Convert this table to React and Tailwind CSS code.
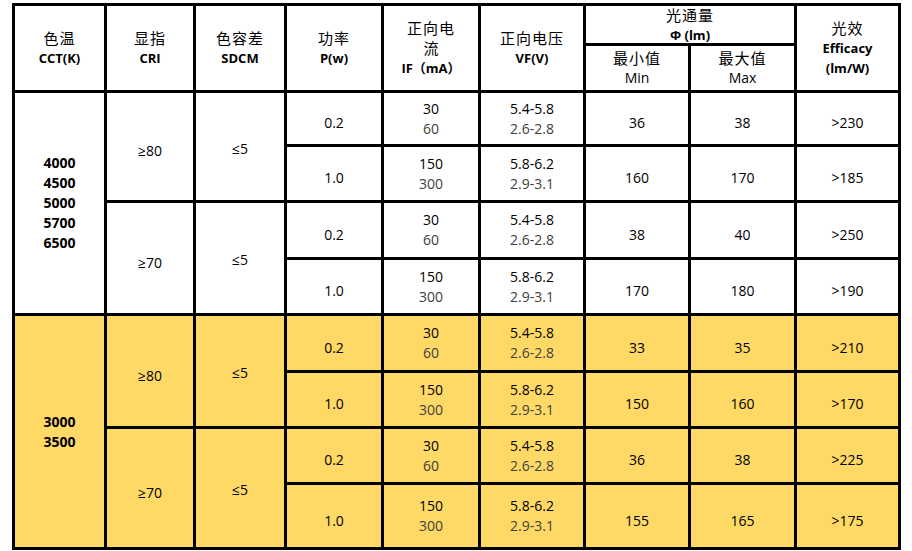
const groups = [
  {
    cct: ["4000", "4500", "5000", "5700", "6500"],
    bg: "bg-white",
    rows: [
      {
        cri: "≥80",
        items: [
          { p: "0.2", i: ["30", "60"], v: ["5.4-5.8", "2.6-2.8"], min: "36", max: "38", eff: ">230" },
          { p: "1.0", i: ["150", "300"], v: ["5.8-6.2", "2.9-3.1"], min: "160", max: "170", eff: ">185" },
        ],
      },
      {
        cri: "≥70",
        items: [
          { p: "0.2", i: ["30", "60"], v: ["5.4-5.8", "2.6-2.8"], min: "38", max: "40", eff: ">250" },
          { p: "1.0", i: ["150", "300"], v: ["5.8-6.2", "2.9-3.1"], min: "170", max: "180", eff: ">190" },
        ],
      },
    ],
  },
  {
    cct: ["3000", "3500"],
    bg: "bg-[#ffd966]",
    rows: [
      {
        cri: "≥80",
        items: [
          { p: "0.2", i: ["30", "60"], v: ["5.4-5.8", "2.6-2.8"], min: "33", max: "35", eff: ">210" },
          { p: "1.0", i: ["150", "300"], v: ["5.8-6.2", "2.9-3.1"], min: "150", max: "160", eff: ">170" },
        ],
      },
      {
        cri: "≥70",
        items: [
          { p: "0.2", i: ["30", "60"], v: ["5.4-5.8", "2.6-2.8"], min: "36", max: "38", eff: ">225" },
          { p: "1.0", i: ["150", "300"], v: ["5.8-6.2", "2.9-3.1"], min: "155", max: "165", eff: ">175" },
        ],
      },
    ],
  },
];

const font = {
  fontFamily: '"Open Sans", "Noto Sans CJK SC", sans-serif',
};

const Head = ({ className = "", children }) => (
  <div className={`bg-white flex flex-col items-center justify-center text-center leading-[20px] text-black ${className}`}>
    {children}
  </div>
);

const Two = ({ bg, lines }) => (
  <div className={`${bg} flex flex-col items-center justify-center text-[14px] leading-[20px]`}>
    <span className="text-black">{lines[0]}</span>
    <span className="text-[#404040]">{lines[1]}</span>
  </div>
);

const One = ({ bg, children, className = "pt-2" }) => (
  <div className={`${bg} flex items-center justify-center text-[14px] text-black ${className}`}>
    {children}
  </div>
);

const App = () => {
  return (
    <div className="w-[912px] h-[551px] bg-white pl-[12px] pt-[3px]" style={font}>
      <div className="grid w-[889px] bg-black p-[3px] gap-[3px] grid-cols-[89px_86px_88px_94px_94px_102px_102px_103px_101px] grid-rows-[37px_44px_51px_53px_54px_53px_54px_53px_53px_62px]">
        <Head className="row-span-2">
          <span className="text-[15px] tracking-[1px]">色温</span>
          <span className="text-[13px] font-bold">CCT(K)</span>
        </Head>
        <Head className="row-span-2">
          <span className="text-[15px] tracking-[1px]">显指</span>
          <span className="text-[13px] font-bold">CRI</span>
        </Head>
        <Head className="row-span-2">
          <span className="text-[15px] tracking-[1px]">色容差</span>
          <span className="text-[13px] font-bold">SDCM</span>
        </Head>
        <Head className="row-span-2">
          <span className="text-[15px] tracking-[1px]">功率</span>
          <span className="text-[13px] font-bold">P(w)</span>
        </Head>
        <Head className="row-span-2">
          <span className="text-[15px] tracking-[1px]">正向电</span>
          <span className="text-[15px]">流</span>
          <span className="text-[13px] font-bold">IF（mA）</span>
        </Head>
        <Head className="row-span-2">
          <span className="text-[15px] tracking-[1px]">正向电压</span>
          <span className="text-[13px] font-bold">VF(V)</span>
        </Head>
        <Head className="col-span-2">
          <span className="text-[15px] tracking-[1px]">光通量</span>
          <span className="text-[13px] font-bold">Φ (lm)</span>
        </Head>
        <Head className="row-span-2">
          <span className="text-[15px] tracking-[1px]">光效</span>
          <span className="text-[13px] font-bold">Efficacy</span>
          <span className="text-[13px] font-bold">(lm/W)</span>
        </Head>
        <Head className="text-[#404040]">
          <span className="text-[15px] tracking-[1px]">最小值</span>
          <span className="text-[14px]">Min</span>
        </Head>
        <Head className="text-[#404040]">
          <span className="text-[15px] tracking-[1px]">最大值</span>
          <span className="text-[14px]">Max</span>
        </Head>

        {groups.map((g, gi) =>
          g.rows.map((r, ri) => [
            ri === 0 && (
              <div
                key={`cct-${gi}`}
                className={`${g.bg} row-span-4 flex flex-col items-center justify-center text-[14px] font-bold leading-[20px] text-black`}
              >
                {g.cct.map((c) => (
                  <span key={c}>{c}</span>
                ))}
              </div>
            ),
            <One key={`cri-${gi}-${ri}`} bg={`${g.bg} row-span-2`}>
              {r.cri}
            </One>,
            <One key={`sd-${gi}-${ri}`} bg={`${g.bg} row-span-2`} className="pt-[3px]">
              ≤5
            </One>,
            ...r.items.map((it, ii) => [
              <One key={`p-${gi}-${ri}-${ii}`} bg={g.bg}>
                {it.p}
              </One>,
              <Two key={`i-${gi}-${ri}-${ii}`} bg={g.bg} lines={it.i} />,
              <Two key={`v-${gi}-${ri}-${ii}`} bg={g.bg} lines={it.v} />,
              <One key={`mn-${gi}-${ri}-${ii}`} bg={g.bg}>
                {it.min}
              </One>,
              <One key={`mx-${gi}-${ri}-${ii}`} bg={g.bg}>
                {it.max}
              </One>,
              <One key={`e-${gi}-${ri}-${ii}`} bg={g.bg}>
                {it.eff}
              </One>,
            ]),
          ])
        )}
      </div>
    </div>
  );
};

export default App;
